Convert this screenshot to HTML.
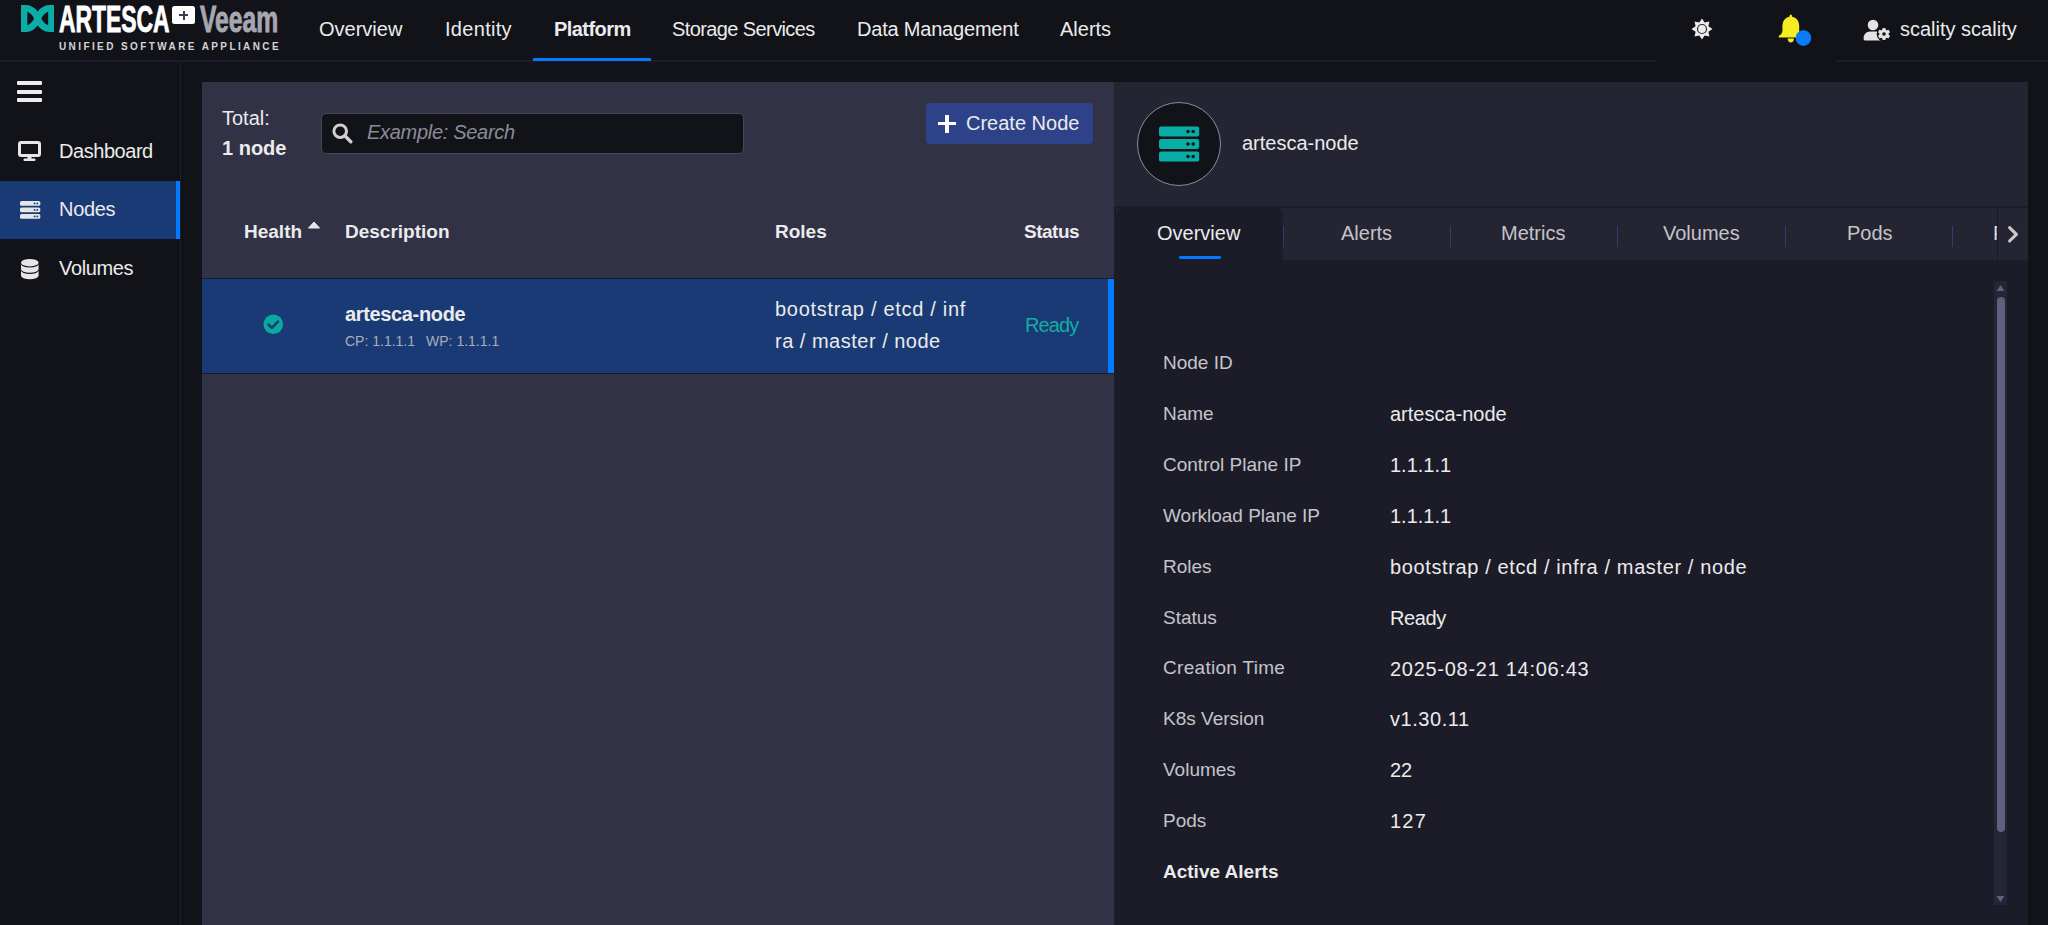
<!DOCTYPE html>
<html><head><meta charset="utf-8">
<style>
*{box-sizing:border-box;margin:0;padding:0}
html,body{width:2048px;height:925px;overflow:hidden;background:#121319;font-family:"Liberation Sans",sans-serif;color:#ebebeb}
.a{position:absolute;white-space:nowrap}
.t20{font-size:20px;line-height:20px}
.t19{font-size:19px;line-height:19px}
.b{font-weight:bold}
</style></head><body>
<!-- NAVBAR -->
<div class="a" style="left:0;top:0;width:2048px;height:60px;background:#121319"></div>
<div class="a" style="left:0;top:60px;width:1657px;height:2px;background:#1d1d2a"></div>
<div class="a" style="left:1836px;top:60px;width:212px;height:2px;background:#1d1d2a"></div>

<!-- logo -->
<svg class="a" style="left:20.8px;top:5.2px" width="33.4" height="27" viewBox="0 0 33.4 27">
<path fill="#0aada5" fill-rule="evenodd" d="M0 0 L5.5 0 Q12 0.5 16.7 6.5 Q21.4 0.5 28 0 L33.4 0 L33.4 27 L28 27 Q21.4 26.5 16.7 20.5 Q12 26.5 5.5 27 L0 27 Z M6.3 6.5 L6.3 20.3 Q11.5 17.5 13 13.4 Q11.5 9.3 6.3 6.5 Z M27.2 6.5 Q22 9.3 20.4 13.4 Q22 17.5 27.2 20.3 Z"/>
</svg>
<div class="a b" style="left:59px;top:-1px;font-size:37.7px;line-height:40px;color:#fff;-webkit-text-stroke:0.9px #fff;transform:scaleX(0.607);transform-origin:0 0">ARTESCA</div>
<div class="a" style="left:172px;top:6px;width:23px;height:17.5px;background:#fff;border-radius:2.5px"></div>
<div class="a" style="left:179px;top:14px;width:9px;height:2px;background:#3a3a52"></div>
<div class="a" style="left:182.5px;top:10.5px;width:2px;height:9px;background:#3a3a52"></div>
<div class="a b" style="left:200px;top:-1px;font-size:37.7px;line-height:40px;color:#a7a7af;-webkit-text-stroke:0.9px #a7a7af;transform:scaleX(0.655);transform-origin:0 0">Veeam</div>
<div class="a b" style="left:59px;top:40.7px;font-size:10px;line-height:11px;color:#d4d4d6;letter-spacing:2.4px">UNIFIED SOFTWARE APPLIANCE</div>

<!-- nav items -->
<div class="a t20" style="left:319px;top:19px">Overview</div>
<div class="a t20" style="left:445px;top:19px;letter-spacing:0.3px">Identity</div>
<div class="a t20 b" style="left:554px;top:19px;letter-spacing:-0.55px">Platform</div>
<div class="a t20" style="left:672px;top:19px;letter-spacing:-0.6px">Storage Services</div>
<div class="a t20" style="left:857px;top:19px;letter-spacing:-0.2px">Data Management</div>
<div class="a t20" style="left:1060px;top:19px">Alerts</div>
<div class="a" style="left:533px;top:58px;width:118px;height:3px;background:#037aff"></div>

<!-- right icons -->
<svg class="a" style="left:1691px;top:18px" width="22" height="22" viewBox="-11 -11 22 22">
<path fill="#ececec" d="M0-10.5 L2.65-6.4 L7.42-7.42 L6.4-2.65 L10.5 0 L6.4 2.65 L7.42 7.42 L2.65 6.4 L0 10.5 L-2.65 6.4 L-7.42 7.42 L-6.4 2.65 L-10.5 0 L-6.4-2.65 L-7.42-7.42 L-2.65-6.4 Z"/>
<circle r="5.1" fill="#2a2a2e"/><circle r="3.9" fill="#ececec"/>
</svg>
<svg class="a" style="left:1778px;top:14px" width="34" height="34" viewBox="0 0 34 34">
<path fill="#f5ec22" d="M12.8 0.6 Q14 0.6 14.2 2.8 Q20.8 4.2 21.2 11.5 L21.2 17.5 Q21.8 20.8 24.6 22 L24.6 23.6 L0.8 23.6 L0.8 22 Q3.8 20.8 4.4 17.5 L4.4 11.5 Q4.8 4.2 11.4 2.8 Q11.6 0.6 12.8 0.6 Z M9.6 24.5 L16 24.5 Q15.6 28.6 12.8 28.6 Q10 28.6 9.6 24.5 Z"/>
<circle cx="25.4" cy="24.1" r="7.8" fill="#0a7aff"/>
</svg>
<svg class="a" style="left:1863px;top:19px" width="28" height="23" viewBox="0 0 28 23">
<circle cx="10" cy="6" r="5.3" fill="#e3e3e3"/>
<path fill="#e3e3e3" d="M2 21.5 Q0.5 21.5 0.6 19.5 Q0.8 12.8 7 12.5 L13 12.5 Q16 12.8 17.5 14.5 L17.5 21.5 Z"/>
<circle cx="21" cy="15" r="7.3" fill="#121319"/>
<g transform="translate(21 15)" fill="#e3e3e3">
<circle r="4.6"/>
<rect x="-1.7" y="-6.1" width="3.4" height="12.2" rx="1"/>
<rect x="-1.7" y="-6.1" width="3.4" height="12.2" rx="1" transform="rotate(60)"/>
<rect x="-1.7" y="-6.1" width="3.4" height="12.2" rx="1" transform="rotate(120)"/>
</g>
<circle cx="21" cy="15" r="1.8" fill="#121319"/>
</svg>
<div class="a t20" style="left:1900px;top:19px">scality scality</div>

<!-- SIDEBAR -->
<div class="a" style="left:180px;top:62px;width:1px;height:863px;background:#1d1d2a"></div>
<div class="a" style="left:17px;top:81px;width:25px;height:4px;background:#ececec;border-radius:1px"></div>
<div class="a" style="left:17px;top:89.5px;width:25px;height:4px;background:#ececec;border-radius:1px"></div>
<div class="a" style="left:17px;top:98px;width:25px;height:4px;background:#ececec;border-radius:1px"></div>
<svg class="a" style="left:18px;top:141px" width="23" height="21" viewBox="0 0 23 21">
<rect x="1.5" y="1.5" width="20" height="13" rx="1.5" fill="none" stroke="#e6e6e6" stroke-width="3"/>
<rect x="9.5" y="15" width="4" height="3" fill="#e6e6e6"/>
<rect x="5.5" y="17.5" width="12" height="2.5" rx="1" fill="#e6e6e6"/>
</svg>
<div class="a t20" style="left:59px;top:141px;letter-spacing:-0.45px">Dashboard</div>
<div class="a" style="left:0;top:181px;width:180px;height:58px;background:#1a3a75"></div>
<div class="a" style="left:176px;top:181px;width:4px;height:58px;background:#037aff"></div>
<svg class="a" style="left:19.7px;top:201.4px" width="21" height="18" viewBox="0 0 21 18">
<g fill="#e6e6e6"><rect x="0" y="0" width="20.3" height="4.8" rx="1.6"/><rect x="0" y="6.5" width="20.3" height="4.8" rx="1.6"/><rect x="0" y="13" width="20.3" height="4.8" rx="1.6"/></g>
<g fill="#1a3a75"><circle cx="14.6" cy="2.4" r="0.95"/><circle cx="17.3" cy="2.4" r="0.95"/><circle cx="14.6" cy="8.9" r="0.95"/><circle cx="17.3" cy="8.9" r="0.95"/><circle cx="14.6" cy="15.4" r="0.95"/><circle cx="17.3" cy="15.4" r="0.95"/></g>
</svg>
<div class="a t20" style="left:59px;top:199px;letter-spacing:-0.3px">Nodes</div>
<svg class="a" style="left:20.8px;top:258.9px" width="18" height="21" viewBox="0 0 18 21">
<g fill="#e6e6e6"><ellipse cx="8.8" cy="3.7" rx="8.8" ry="3.7"/>
<path d="M0 4.9 A8.8 3.7 0 0 0 17.6 4.9 L17.6 10.1 A8.8 3.7 0 0 1 0 10.1 Z"/>
<path d="M0 11.3 A8.8 3.7 0 0 0 17.6 11.3 L17.6 16.6 A8.8 3.7 0 0 1 0 16.6 Z"/></g>
</svg>
<div class="a t20" style="left:59px;top:258px;letter-spacing:-0.35px">Volumes</div>

<!-- LEFT PANEL -->
<div class="a" style="left:202px;top:82px;width:912px;height:843px;background:#323246"></div>

<!-- left panel content -->
<div class="a t20" style="left:222px;top:108px">Total:</div>
<div class="a t20 b" style="left:222px;top:138px">1 node</div>
<div class="a" style="left:321px;top:113px;width:423px;height:41px;background:#121319;border:1px solid #474758;border-radius:5px"></div>
<svg class="a" style="left:332px;top:123px" width="21" height="21" viewBox="0 0 21 21">
<circle cx="8.2" cy="8.2" r="6.3" fill="none" stroke="#d0d0d0" stroke-width="3"/>
<path d="M12.8 12.8 L18.8 18.8" stroke="#d0d0d0" stroke-width="3.4" stroke-linecap="round"/>
</svg>
<div class="a t20" style="left:367px;top:122px;font-style:italic;color:#8b8b96;letter-spacing:-0.3px">Example: Search</div>
<div class="a" style="left:926px;top:103px;width:167px;height:41px;background:#2e4289;border-radius:4px"></div>
<div class="a" style="left:938px;top:121.5px;width:18px;height:3.8px;background:#fff"></div>
<div class="a" style="left:945.1px;top:114.5px;width:3.8px;height:18px;background:#fff"></div>
<div class="a t20" style="left:966px;top:113px">Create Node</div>

<div class="a t19 b" style="left:244px;top:222px">Health</div>
<svg class="a" style="left:308px;top:221px" width="12" height="8" viewBox="0 0 12 8"><path d="M0.5 7 L6 1 L11.5 7 Z" fill="#e6e6e6" stroke="#e6e6e6" stroke-width="1" stroke-linejoin="round"/></svg>
<div class="a t19 b" style="left:345px;top:222px">Description</div>
<div class="a t19 b" style="left:775px;top:222px">Roles</div>
<div class="a t19 b" style="left:1024px;top:222px;letter-spacing:-0.5px">Status</div>
<div class="a" style="left:202px;top:278px;width:912px;height:1px;background:#1a1a26"></div>
<div class="a" style="left:202px;top:279px;width:912px;height:94px;background:#1a3a75"></div>
<div class="a" style="left:1108px;top:279px;width:6px;height:94px;background:#037aff"></div>
<div class="a" style="left:202px;top:373px;width:912px;height:1px;background:#1a1a26"></div>
<svg class="a" style="left:263px;top:314px" width="21" height="21" viewBox="0 0 21 21">
<circle cx="10.3" cy="10.3" r="9.8" fill="#0aa89e"/>
<path d="M5.6 10.6 L8.8 13.8 L15 7.6" fill="none" stroke="#1a3a75" stroke-width="2.6" stroke-linecap="round" stroke-linejoin="round"/>
</svg>
<div class="a t20 b" style="left:345px;top:304px;letter-spacing:-0.35px">artesca-node</div>
<div class="a" style="left:345px;top:334px;font-size:14px;line-height:14px;color:#a9acbd">CP: 1.1.1.1<span style="margin-left:11px">WP: 1.1.1.1</span></div>
<div class="a t20" style="left:775px;top:299px;letter-spacing:0.7px">bootstrap / etcd / inf</div>
<div class="a t20" style="left:775px;top:331px;letter-spacing:0.5px">ra / master / node</div>
<div class="a t20" style="left:1025px;top:315px;color:#12ada3;letter-spacing:-0.9px">Ready</div>

<!-- RIGHT PANEL -->
<div class="a" style="left:1114px;top:82px;width:914px;height:843px;background:#1c1c28"></div>
<div class="a" style="left:1114px;top:82px;width:914px;height:124px;background:#242433"></div>

<!-- right header -->
<div class="a" style="left:1137px;top:102px;width:84px;height:84px;border-radius:50%;background:#121319;border:1.3px solid #8c8aa8"></div>
<svg class="a" style="left:1159px;top:126px" width="41" height="36" viewBox="0 0 41 36">
<g fill="#0aada5"><rect x="0" y="0.4" width="40.2" height="10.1" rx="2.2"/><rect x="0" y="12.9" width="40.2" height="10.1" rx="2.2"/><rect x="0" y="25.5" width="40.2" height="10.1" rx="2.2"/></g>
<g fill="#121319"><circle cx="29" cy="5.45" r="1.8"/><circle cx="34.2" cy="5.45" r="1.8"/><circle cx="29" cy="17.95" r="1.8"/><circle cx="34.2" cy="17.95" r="1.8"/><circle cx="29" cy="30.55" r="1.8"/><circle cx="34.2" cy="30.55" r="1.8"/></g>
</svg>
<div class="a t20" style="left:1242px;top:133px">artesca-node</div>
<div class="a" style="left:1114px;top:206px;width:914px;height:2px;background:#1c1c27"></div>
<div class="a" style="left:1116px;top:208px;width:912px;height:52px;background:#242433"></div>
<div class="a" style="left:1116px;top:208px;width:167px;height:52px;background:#1c1c28;border-radius:6px 6px 0 0"></div>
<div class="a t20" style="left:1157px;top:223px">Overview</div>
<div class="a" style="left:1179px;top:256px;width:42px;height:3px;background:#037aff;border-radius:2px"></div>
<div class="a" style="left:1283px;top:226px;width:1px;height:21px;background:#2d3f6e"></div>
<div class="a" style="left:1450px;top:226px;width:1px;height:21px;background:#2d3f6e"></div>
<div class="a" style="left:1617px;top:226px;width:1px;height:21px;background:#2d3f6e"></div>
<div class="a" style="left:1785px;top:226px;width:1px;height:21px;background:#2d3f6e"></div>
<div class="a" style="left:1952px;top:226px;width:1px;height:21px;background:#2d3f6e"></div>
<div class="a t20" style="left:1341px;top:223px;color:#c4c4c8">Alerts</div>
<div class="a t20" style="left:1501px;top:223px;color:#c4c4c8">Metrics</div>
<div class="a t20" style="left:1663px;top:223px;color:#c4c4c8">Volumes</div>
<div class="a t20" style="left:1847px;top:223px;color:#c4c4c8">Pods</div>
<div class="a" style="left:1990px;top:208px;width:38px;height:52px;overflow:hidden"><div class="a t20" style="left:3px;top:15px;color:#d8d8dc">Pods</div></div>
<div class="a" style="left:1997px;top:208px;width:31px;height:52px;background:#242433;border-left:1px solid #1a1a24"></div>
<svg class="a" style="left:2007px;top:225px" width="12" height="19" viewBox="0 0 12 19"><path d="M2.6 2.6 L9.4 9.3 L2.6 16" fill="none" stroke="#c9c9cc" stroke-width="3.1" stroke-linecap="round" stroke-linejoin="round"/></svg>

<!-- details -->
<div class="a t19" style="left:1163px;top:353.0px;color:#c4c4ca">Node ID</div>
<div class="a t19" style="left:1163px;top:403.9px;color:#c4c4ca">Name</div>
<div class="a t19" style="left:1163px;top:454.8px;color:#c4c4ca">Control Plane IP</div>
<div class="a t19" style="left:1163px;top:505.7px;color:#c4c4ca">Workload Plane IP</div>
<div class="a t19" style="left:1163px;top:556.6px;color:#c4c4ca">Roles</div>
<div class="a t19" style="left:1163px;top:607.5px;color:#c4c4ca">Status</div>
<div class="a t19" style="left:1163px;top:658.4px;color:#c4c4ca;letter-spacing:0.3px">Creation Time</div>
<div class="a t19" style="left:1163px;top:709.3px;color:#c4c4ca">K8s Version</div>
<div class="a t19" style="left:1163px;top:760.2px;color:#c4c4ca">Volumes</div>
<div class="a t19" style="left:1163px;top:811.1px;color:#c4c4ca">Pods</div>
<div class="a t19 b" style="left:1163px;top:862.0px">Active Alerts</div>
<div class="a t20" style="left:1390px;top:404.0px">artesca-node</div>
<div class="a t20" style="left:1390px;top:454.9px">1.1.1.1</div>
<div class="a t20" style="left:1390px;top:505.8px">1.1.1.1</div>
<div class="a t20" style="left:1390px;top:556.7px;letter-spacing:0.62px">bootstrap / etcd / infra / master / node</div>
<div class="a t20" style="left:1390px;top:607.6px;letter-spacing:-0.4px">Ready</div>
<div class="a t20" style="left:1390px;top:658.5px;letter-spacing:0.72px">2025-08-21 14:06:43</div>
<div class="a t20" style="left:1390px;top:709.4px;letter-spacing:0.55px">v1.30.11</div>
<div class="a t20" style="left:1390px;top:760.3px">22</div>
<div class="a t20" style="left:1390px;top:811.2px;letter-spacing:1.2px">127</div>

<!-- scrollbar -->
<div class="a" style="left:1994px;top:281px;width:13px;height:624px;background:#252535"></div>
<svg class="a" style="left:1996px;top:284px" width="9" height="8" viewBox="0 0 9 8"><path d="M0.5 7 L4.5 1 L8.5 7 Z" fill="#5f5f80"/></svg>
<svg class="a" style="left:1996px;top:895px" width="9" height="8" viewBox="0 0 9 8"><path d="M0.5 1 L4.5 7 L8.5 1 Z" fill="#5f5f80"/></svg>
<div class="a" style="left:1997px;top:297px;width:8px;height:535px;background:#5f5f80;border-radius:4px"></div>
</body></html>
